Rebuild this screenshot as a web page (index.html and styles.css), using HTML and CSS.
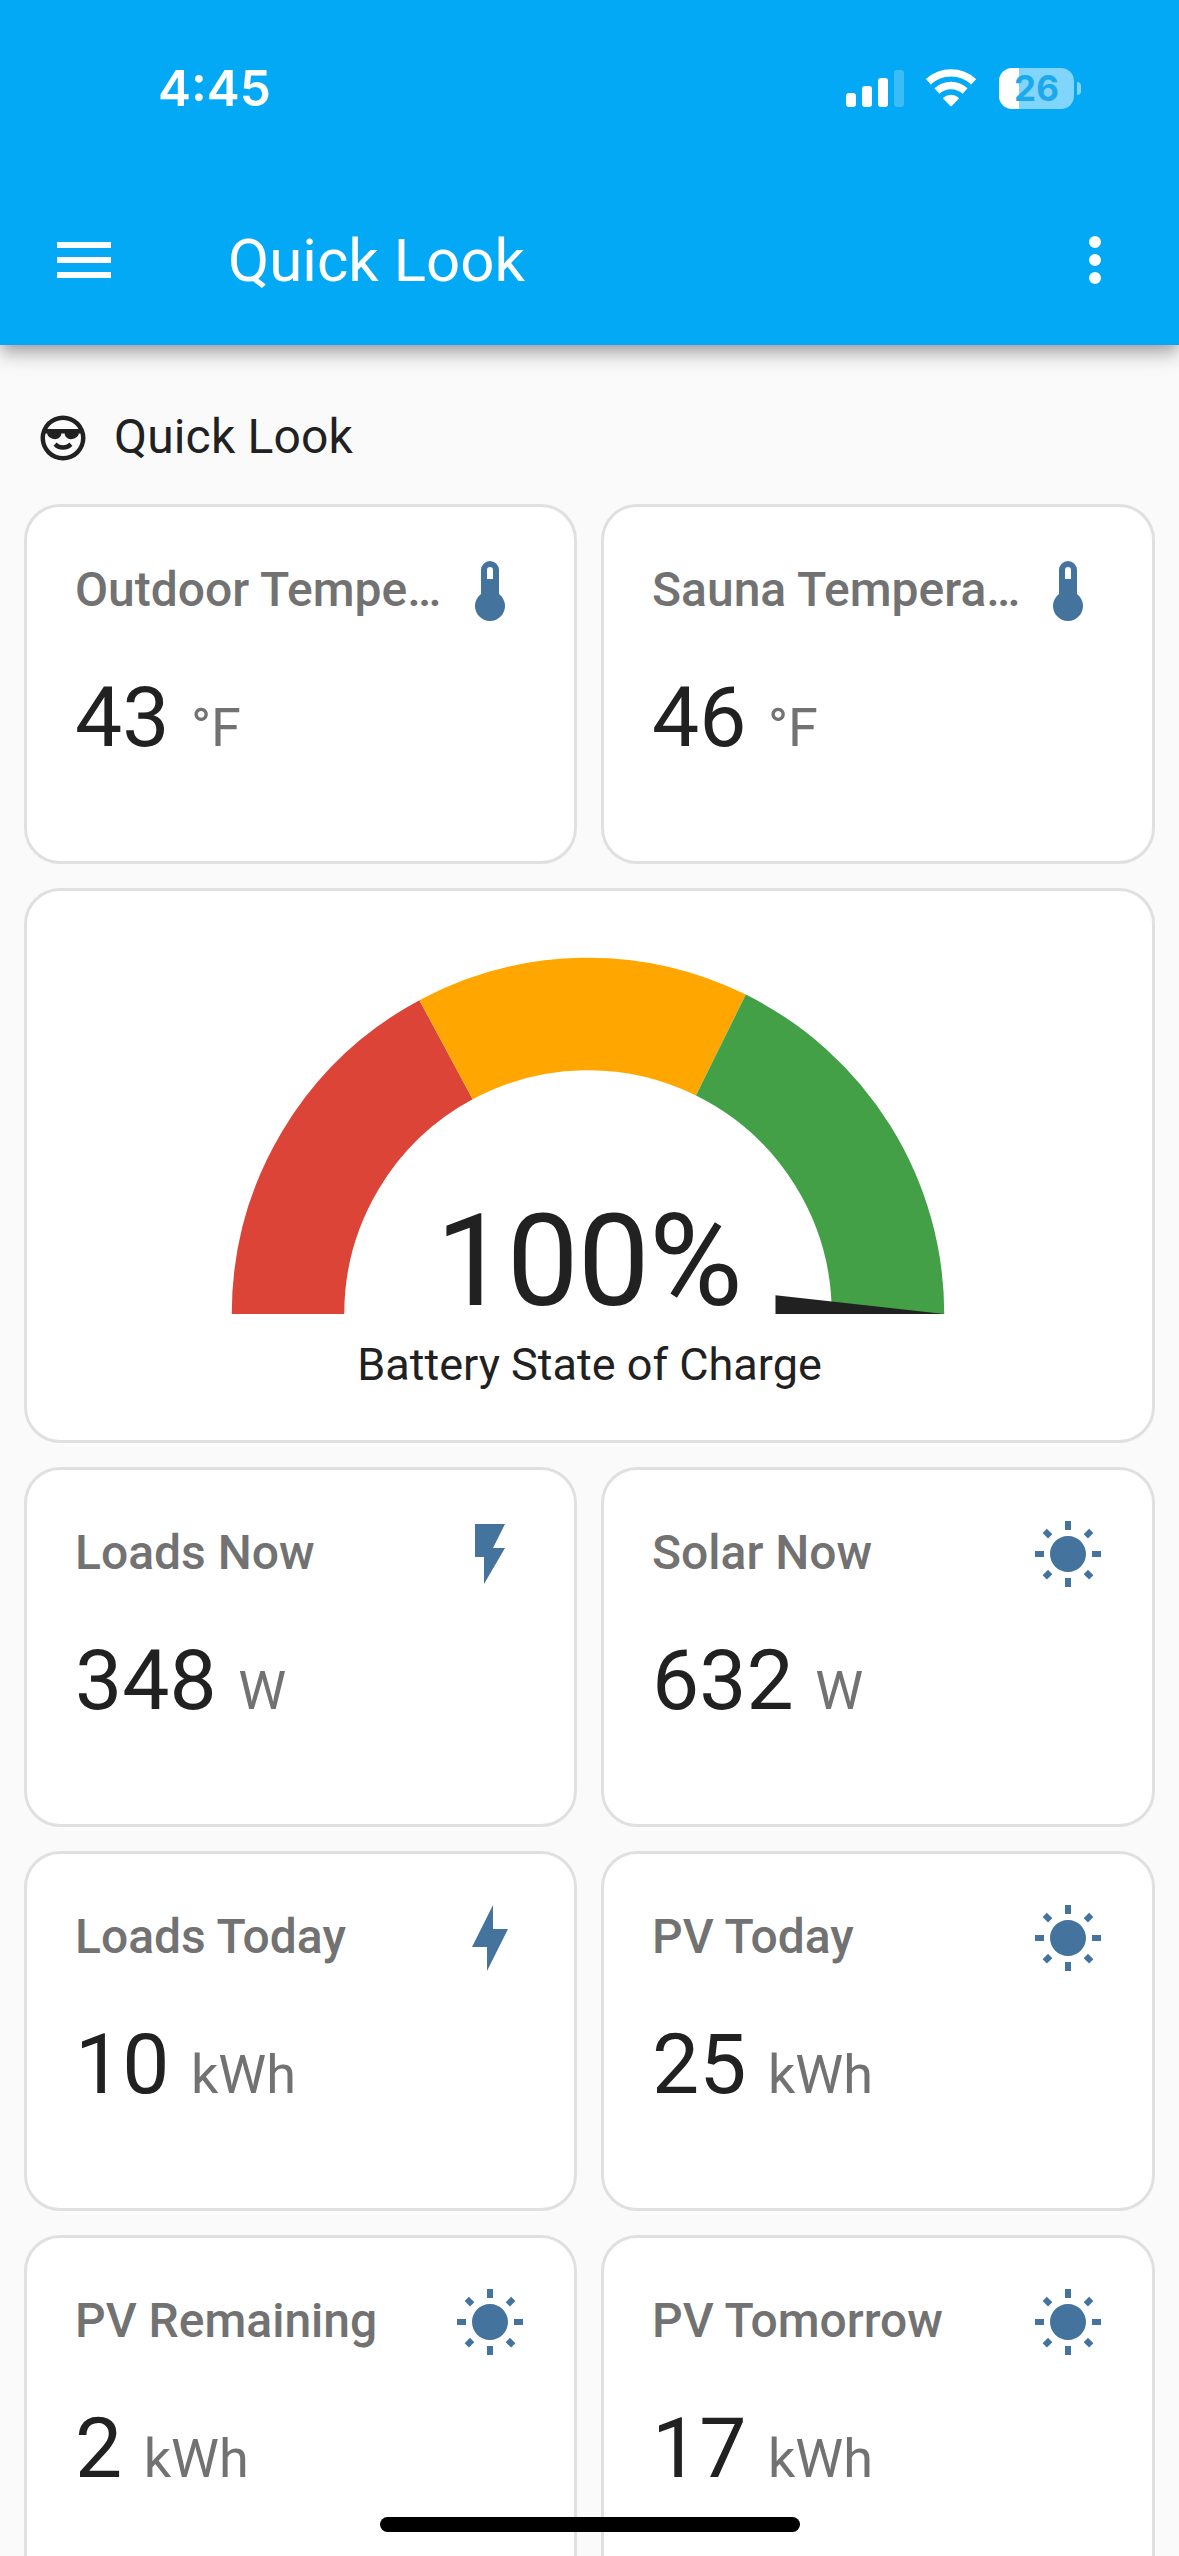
FILE: index.html
```html
<!DOCTYPE html>
<html lang="en">
<head>
  <meta charset="UTF-8" />
  <meta name="viewport" content="width=device-width, initial-scale=1" />
  <title>Quick Look</title>
  <link rel="stylesheet" href="styles.css">
</head>
<body>

  <!-- Icons shared by the cards -->
  <svg class="icon-defs">
    <symbol id="thermometer" viewBox="0 0 24 24"><path d="M15 13V5A3 3 0 0 0 9 5V13A5 5 0 1 0 15 13M12 4A1 1 0 0 1 13 5V8H11V5A1 1 0 0 1 12 4Z"/></symbol>
    <symbol id="flash" viewBox="0 0 24 24"><path d="M7,2V13H10V22L17,10H13L17,2H7Z"/></symbol>
    <symbol id="bolt" viewBox="0 0 24 24"><path d="M11 15H6L13 1V9H18L11 23V15Z"/></symbol>
    <symbol id="sun" viewBox="0 0 24 24"><path d="M3.55 19.09L4.96 20.5L6.76 18.71L5.34 17.29M12 6C8.69 6 6 8.69 6 12S8.69 18 12 18 18 15.31 18 12C18 8.68 15.31 6 12 6M20 13H23V11H20M17.24 18.71L19.04 20.5L20.45 19.09L18.66 17.29M20.45 5L19.04 3.6L17.24 5.39L18.66 6.81M13 1H11V4H13M6.76 5.39L4.96 3.6L3.55 5L5.34 6.81L6.76 5.39M1 13H4V11H1M13 20H11V23H13"/></symbol>
  </svg>

  <header class="app-header">
    <div class="status-bar">
      <span class="time">4:45</span>
      <div class="status-icons">
        <svg class="signal" viewBox="0 0 58 37">
          <rect x="0" y="23" width="10" height="14" rx="3"/>
          <rect x="16" y="16" width="10" height="21" rx="3"/>
          <rect x="32" y="8" width="10" height="29" rx="3"/>
          <rect class="dim" x="48" y="0" width="10" height="37" rx="3"/>
        </svg>
        <svg class="wifi" viewBox="0 0 50 38">
          <path class="arc" d="M2.3 12.8A33.3 33.3 0 0 1 47.7 12.8"/>
          <path class="arc" d="M10.9 22A20.7 20.7 0 0 1 39.1 22"/>
          <path class="tip" d="M18.2 29.3A10.4 10.4 0 0 1 31.8 29.3L25 36.4Z"/>
        </svg>
        <div class="battery"><span class="battery-body">26</span><span class="battery-cap"></span></div>
      </div>
    </div>
    <div class="toolbar">
      <svg class="icon" viewBox="0 0 24 24"><path d="M3,6H21V8H3V6M3,11H21V13H3V11M3,16H21V18H3V16Z"/></svg>
      <h1>Quick Look</h1>
      <svg class="icon" viewBox="0 0 24 24"><path d="M12,16A2,2 0 0,1 14,18A2,2 0 0,1 12,20A2,2 0 0,1 10,18A2,2 0 0,1 12,16M12,10A2,2 0 0,1 14,12A2,2 0 0,1 12,14A2,2 0 0,1 10,12A2,2 0 0,1 12,10M12,4A2,2 0 0,1 14,6A2,2 0 0,1 12,8A2,2 0 0,1 10,6A2,2 0 0,1 12,4Z"/></svg>
    </div>
  </header>

  <main>
    <div class="heading">
      <svg viewBox="0 0 24 24"><path d="M19,10C19,11.38 16.88,12.5 15.5,12.5C14.12,12.5 12.75,11.38 12.75,10H11.25C11.25,11.38 9.88,12.5 8.5,12.5C7.12,12.5 5,11.38 5,10H4.25C4.09,10.64 4,11.31 4,12A8,8 0 0,0 12,20A8,8 0 0,0 20,12C20,11.31 19.91,10.64 19.75,10H19M12,4C9.04,4 6.45,5.61 5.07,8H18.93C17.55,5.61 14.96,4 12,4M22,12A10,10 0 0,1 12,22A10,10 0 0,1 2,12A10,10 0 0,1 12,2A10,10 0 0,1 22,12M12,17.23C10.25,17.23 8.71,16.5 7.81,15.42L9.23,14C9.68,14.72 10.75,15.23 12,15.23C13.25,15.23 14.32,14.72 14.77,14L16.19,15.42C15.29,16.5 13.75,17.23 12,17.23Z"/></svg>
      <h2>Quick Look</h2>
    </div>

    <div class="cards">
      <div class="card">
        <div class="card-top"><span class="name">Outdoor Temperature</span><svg class="icon"><use href="#thermometer"/></svg></div>
        <div class="state">43<span class="unit">°F</span></div>
      </div>
      <div class="card">
        <div class="card-top"><span class="name">Sauna Temperature</span><svg class="icon"><use href="#thermometer"/></svg></div>
        <div class="state">46<span class="unit">°F</span></div>
      </div>

      <div class="card gauge-card">
        <svg class="gauge" viewBox="-50 -50 100 50">
          <path class="level red" d="M-40 0A40 40 0 0 1 -18.93 -35.24"/>
          <path class="level amber" d="M-18.93 -35.24A40 40 0 0 1 17.72 -35.86"/>
          <path class="level green" d="M17.72 -35.86A40 40 0 0 1 40 0"/>
          <path class="needle" d="M25 -2.5L47.5 0H25Z"/>
          <text class="gauge-value" x="0.1" y="-1.2">100%</text>
        </svg>
        <div class="gauge-name">Battery State of Charge</div>
      </div>

      <div class="card">
        <div class="card-top"><span class="name">Loads Now</span><svg class="icon"><use href="#flash"/></svg></div>
        <div class="state">348<span class="unit">W</span></div>
      </div>
      <div class="card">
        <div class="card-top"><span class="name">Solar Now</span><svg class="icon"><use href="#sun"/></svg></div>
        <div class="state">632<span class="unit">W</span></div>
      </div>
      <div class="card">
        <div class="card-top"><span class="name">Loads Today</span><svg class="icon"><use href="#bolt"/></svg></div>
        <div class="state">10<span class="unit">kWh</span></div>
      </div>
      <div class="card">
        <div class="card-top"><span class="name">PV Today</span><svg class="icon"><use href="#sun"/></svg></div>
        <div class="state">25<span class="unit">kWh</span></div>
      </div>
      <div class="card">
        <div class="card-top"><span class="name">PV Remaining</span><svg class="icon"><use href="#sun"/></svg></div>
        <div class="state">2<span class="unit">kWh</span></div>
      </div>
      <div class="card">
        <div class="card-top"><span class="name">PV Tomorrow</span><svg class="icon"><use href="#sun"/></svg></div>
        <div class="state">17<span class="unit">kWh</span></div>
      </div>
    </div>
  </main>

  <div class="home-indicator"></div>

</body>
</html>
```
FILE: styles.css
```css
* { box-sizing: border-box; }
body {
  margin: 0;
  height: 2556px;
  overflow: hidden;
  background: #fafafa;
  color: #212121;
  font-family: Roboto, sans-serif;
}
h1, h2 { margin: 0; font-weight: 400; }
svg { display: block; flex: none; }
.icon-defs { display: none; }
.icon {
  width: 72px;
  height: 72px;
  fill: currentColor;
}

/* Header */
.app-header {
  position: relative;
  height: 345px;
  background: #03a9f4;
  color: #fff;
  box-shadow: 0 6px 12px -3px rgba(0,0,0,0.2), 0 12px 15px 0 rgba(0,0,0,0.14), 0 3px 30px 0 rgba(0,0,0,0.12);
}
.status-bar {
  display: flex;
  align-items: center;
  justify-content: space-between;
  height: 176px;
  padding: 0 98px 0 158px;
}
.time {
  font-family: Inter, sans-serif;
  font-size: 49.5px;
  font-weight: 600;
}
.status-icons {
  display: flex;
  align-items: center;
}
.signal {
  width: 58px;
  height: 37px;
  fill: #fff;
}
.signal .dim { opacity: 0.22; }
.wifi {
  width: 50px;
  height: 38px;
  margin: 0 23px 0 22px;
}
.wifi .arc {
  fill: none;
  stroke: #fff;
  stroke-width: 7.4;
}
.wifi .tip {
  fill: #fff;
  stroke: #fff;
  stroke-width: 2;
  stroke-linejoin: round;
}
.battery {
  display: flex;
  align-items: center;
  gap: 3px;
}
.battery-body {
  width: 75px;
  height: 41px;
  border-radius: 13px;
  background: linear-gradient(to right, #fff 20px, #81d4fa 20px);
  color: #1aa9ec;
  font: 700 35px/41px Inter, sans-serif;
  text-align: center;
}
.battery-cap {
  width: 4px;
  height: 13px;
  border-radius: 0 4px 4px 0;
  background: #81d4fa;
}
.toolbar {
  display: flex;
  align-items: center;
  height: 168px;
  padding: 0 48px;
}
.toolbar h1 {
  flex: 1;
  padding-left: 108px;
  font-size: 60px;
}

/* Content */
main { padding: 0 24px; }
.heading {
  display: flex;
  align-items: center;
  gap: 24px;
  height: 159px;
  padding: 27px 12px 0;
}
.heading svg {
  width: 54px;
  height: 54px;
  fill: #212121;
}
.heading h2 {
  padding-bottom: 3px;
  font-size: 48px;
  letter-spacing: 0.15px;
}
.cards {
  display: grid;
  grid-template-columns: 553px 554px;
  gap: 24px;
}
.card {
  min-width: 0;
  height: 360px;
  padding: 48px;
  border: 3px solid #e0e0e0;
  border-radius: 36px;
  background: #fff;
}
.card-top {
  display: flex;
  justify-content: space-between;
  height: 72px;
  color: #44739e;
}
.name {
  overflow: hidden;
  color: #727272;
  font-size: 48px;
  font-weight: 500;
  line-height: 69px;
  text-overflow: ellipsis;
  white-space: nowrap;
}
.state {
  margin-top: 49px;
  font-size: 84px;
  line-height: 84px;
}
.unit {
  margin-left: 21.5px;
  color: #727272;
  font-size: 54px;
}

/* Battery gauge */
.gauge-card {
  grid-column: span 2;
  display: flex;
  flex-direction: column;
  align-items: center;
  height: 555px;
}
.gauge {
  width: 750px;
  height: 375px;
  margin-right: 3px;
  overflow: visible;
}
.level {
  fill: none;
  stroke-width: 15;
}
.red { stroke: #db4437; }
.amber { stroke: #ffa600; }
.green { stroke: #43a047; }
.needle { fill: #212121; }
.gauge-value {
  fill: #212121;
  font-size: 17.07px;
  letter-spacing: -0.12px;
  text-anchor: middle;
}
.gauge-name {
  margin-top: 24px;
  font-size: 45px;
  line-height: 54px;
}

.home-indicator {
  position: fixed;
  left: 380px;
  bottom: 24px;
  width: 420px;
  height: 15px;
  border-radius: 8px;
  background: #000;
}
```
